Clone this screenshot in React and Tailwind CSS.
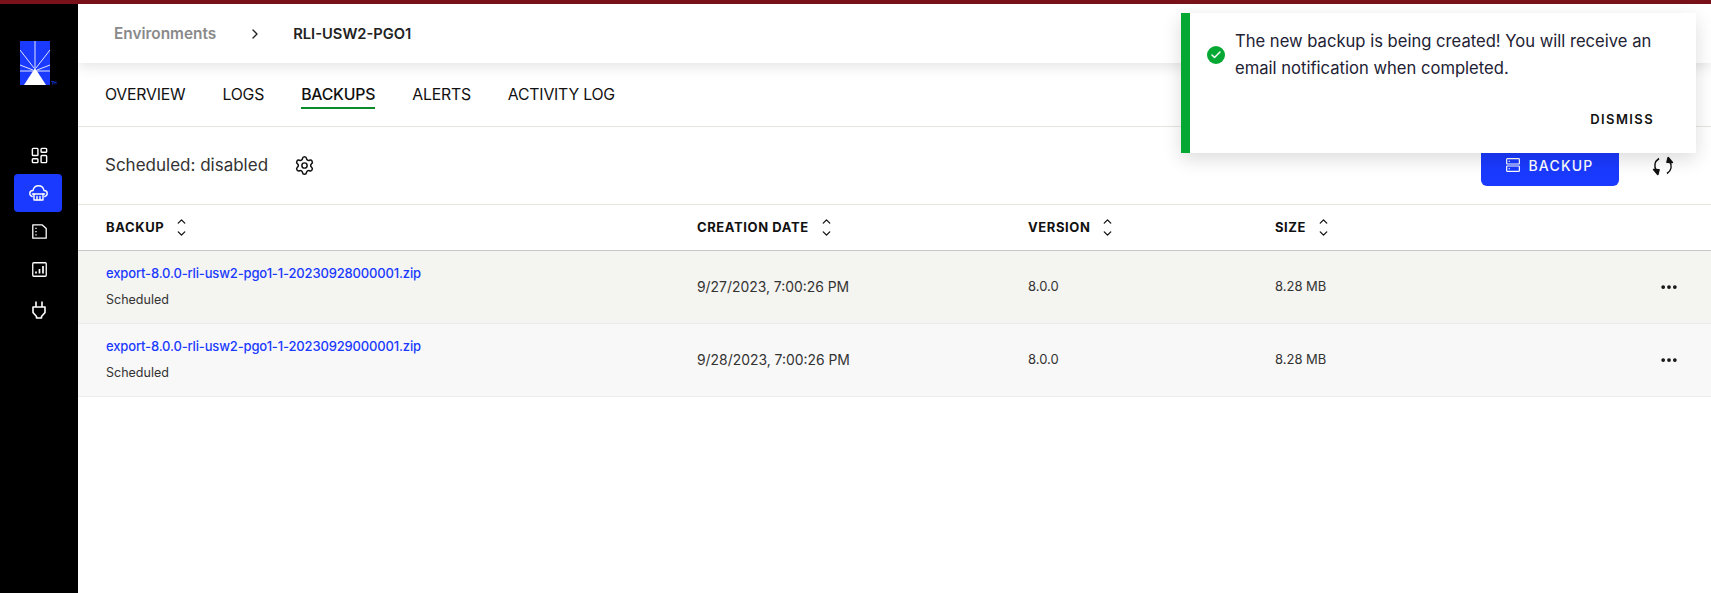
import React from 'react';
import { LayoutDashboard, ChevronRight, Settings, MoreHorizontal, ChevronUp, ChevronDown, Check } from 'lucide-react';

const columns = 'grid grid-cols-[591px_331px_247px_1fr_auto] items-center pl-[28px] pr-[32px]';

const Logo = () => (
  <svg width="38" height="44" viewBox="0 0 38 44" className="block">
    <rect x="0" y="0" width="30" height="44" fill="#1a3aff" />
    <g stroke="#dfe4ff" strokeWidth="1">
      <path d="M15 0V28" />
      <path d="M0 9L14 27" />
      <path d="M30 9L16 27" />
      <path d="M0 24L13 29" />
      <path d="M30 24L17 29" />
      <path d="M0 30H30" />
    </g>
    <path d="M15 27L4 44H26Z" fill="#fff" />
    <path d="M31 40.5h3M32.5 40.5v3M34 43.5v-3l1 1.5 1-1.5v3" stroke="#1a3aff" strokeWidth="0.6" fill="none" />
  </svg>
);

const CloudIcon = () => (
  <svg width="19" height="16" viewBox="0 0 19 16" fill="none" stroke="#fff" strokeWidth="1.4" strokeLinejoin="round" strokeLinecap="round">
    <path d="M3.2 11.5C1.6 11 .8 9.8 .8 8.5.8 6.8 2.2 5.5 4 5.5 4.6 2.8 6.8 .8 9.5 .8 12.2 .8 14.4 2.8 15 5.5 16.8 5.5 18.2 6.8 18.2 8.5 18.2 9.8 17.4 11 15.8 11.5" />
    <path d="M3.5 9H15.5" strokeWidth="1.6" />
    <path d="M5 9V15H14V9" />
    <path d="M8 11.5V15M11 11.5V15" />
  </svg>
);

const ReportIcon = () => (
  <svg width="15" height="15" viewBox="0 0 15 15" fill="none">
    <rect x="0.75" y="0.75" width="13.5" height="13.5" rx="1" stroke="#fff" strokeWidth="1.3" />
    <path d="M4 11.5V9.5M7.5 11.5V7M11 11.5V4" stroke="#fff" strokeWidth="1.7" />
  </svg>
);

const FileIcon = () => (
  <svg width="15" height="15" viewBox="0 0 15 15" fill="none" stroke="#fff" strokeWidth="1.3">
    <path d="M0.8 0.8H10L14.2 4.6V14.2H0.8Z" strokeLinejoin="round" />
    <path d="M4 3.8V5M4 7V8.2M4 10.2V11.4" />
  </svg>
);

const PlugIcon = () => (
  <svg width="14" height="18" viewBox="0 0 14 18" fill="none" stroke="#fff" strokeWidth="1.6" strokeLinejoin="round">
    <path d="M4 0.5V6M10 0.5V6" />
    <path d="M1 6H13V11.5L9.5 15.5V17H4.5V15.5L1 11.5Z" />
  </svg>
);

const SortIcon = () => (
  <span className="flex flex-col items-center ml-[11px] text-[#111]">
    <ChevronUp size={13} strokeWidth={2.4} className="-mb-[1px]" />
    <ChevronDown size={13} strokeWidth={2.4} />
  </span>
);

const RefreshIcon = () => (
  <svg width="22" height="22" viewBox="0 0 22 22" fill="none" stroke="#111" strokeWidth="1.6" strokeLinejoin="round">
    <path d="M7 3.5C2.5 6.5 1.8 11.5 4.5 16" />
    <path d="M1.6 14.5L5.8 19.5 7 14.8Z" fill="#111" />
    <path d="M15 18.5C19.5 15.5 20.2 10.5 17.5 6" />
    <path d="M20.4 7.5L16.2 2.5 15 7.2Z" fill="#111" />
  </svg>
);

const ServerIcon = () => (
  <svg width="14" height="14" viewBox="0 0 13 13" fill="none" stroke="#fff" strokeWidth="1.1">
    <rect x="0.6" y="0.6" width="11.8" height="5" rx="0.6" />
    <rect x="0.6" y="7.4" width="11.8" height="5" rx="0.6" />
    <path d="M2.5 3.1H3.5M2.5 9.9H3.5" />
  </svg>
);

const tabs = ['OVERVIEW', 'LOGS', 'BACKUPS', 'ALERTS', 'ACTIVITY LOG'];

const rows = [
  { file: 'export-8.0.0-rli-usw2-pgo1-1-20230928000001.zip', date: '9/27/2023, 7:00:26 PM', bg: 'bg-[#f4f4f1]' },
  { file: 'export-8.0.0-rli-usw2-pgo1-1-20230929000001.zip', date: '9/28/2023, 7:00:26 PM', bg: 'bg-[#f8f8f8]' },
];

const headers = ['BACKUP', 'CREATION DATE', 'VERSION', 'SIZE'];

export default function App() {
  return (
    <div className="relative w-full h-[593px] overflow-hidden bg-white font-['Inter',sans-serif] text-[#111]">
      <div className="h-[4px] bg-[#7a1319]" />
      <div className="flex h-[589px]">
        {/* sidebar */}
        <aside className="w-[78px] shrink-0 bg-black flex flex-col items-center">
          <div className="mt-[37px] mb-[51px] self-start ml-[20px]">
            <Logo />
          </div>
          <div className="h-[38px] flex items-center justify-center">
            <LayoutDashboard size={19} color="#fff" strokeWidth={1.8} />
          </div>
          <div className="w-[48px] h-[38px] -ml-[2px] rounded-[4px] bg-[#1a3aff] flex items-center justify-center">
            <CloudIcon />
          </div>
          <div className="h-[38px] flex items-center justify-center">
            <FileIcon />
          </div>
          <div className="h-[39px] flex items-center justify-center">
            <ReportIcon />
          </div>
          <div className="h-[39px] mt-[1px] flex items-center justify-center">
            <PlugIcon />
          </div>
        </aside>

        <main className="flex-1 min-w-0">
          <header className="relative h-[59px] flex items-center bg-white shadow-[0_4px_12px_rgba(0,0,0,0.1)] pl-[36px] pt-[1px]">
            <span className="text-[15.4px] font-semibold text-[#8a8a8a]">Environments</span>
            <ChevronRight size={16} strokeWidth={2} className="ml-[31px] text-[#222]" />
            <span className="ml-[30px] text-[14.7px] font-semibold text-[#222]">RLI-USW2-PGO1</span>
          </header>

          <nav className="h-[64px] flex items-center gap-[37px] pl-[27px] border-b border-[#e6e6e0]">
            {tabs.map((t) => (
              <span key={t} className={`relative text-[15.8px] tracking-[-0.2px] ${t === 'BACKUPS' ? 'font-medium' : ''}`}>
                {t}
                {t === 'BACKUPS' && <span className="absolute left-0 right-0 -bottom-[3px] h-[2px] bg-[#0a8a2a]" />}
              </span>
            ))}
          </nav>

          <div className="h-[78px] flex items-center pl-[27px] pr-[37px] border-b border-[#e6e6e0]">
            <span className="text-[17px] text-[#333]">Scheduled: disabled</span>
            <Settings size={21} strokeWidth={1.7} className="ml-[26px]" />
            <button className="ml-auto -mt-[5px] pt-[4px] w-[138px] h-[46px] rounded-[6px] bg-[#1a3aff] text-white text-[14px] font-medium tracking-[1.2px] flex items-center justify-center gap-[8px]">
              <ServerIcon />
              BACKUP
            </button>
            <span className="ml-[33px]">
              <RefreshIcon />
            </span>
          </div>

          <div className={`${columns} h-[46px] border-b border-[#c8c8c8]`}>
            {headers.map((h) => (
              <div key={h} className="flex items-center text-[13px] font-bold tracking-[0.6px]">
                {h}
                <SortIcon />
              </div>
            ))}
            <span />
          </div>

          {rows.map((r) => (
            <div key={r.file} className={`${columns} ${r.bg} h-[73px] border-b border-[#ececec]`}>
              <div>
                <a className="block text-[13px] font-medium text-[#1a3aff] tracking-[-0.15px]">{r.file}</a>
                <div className="mt-[7px] text-[12.5px] text-[#333]">Scheduled</div>
              </div>
              <span className="text-[13.9px] text-[#333]">{r.date}</span>
              <span className="text-[13px] text-[#333]">8.0.0</span>
              <span className="text-[13px] text-[#333]">8.28 MB</span>
              <MoreHorizontal size={20} strokeWidth={2.5} />
            </div>
          ))}
        </main>
      </div>

      {/* toast */}
      <div className="absolute left-[1181px] top-[13px] w-[515px] h-[140px] bg-white border-l-[9px] border-[#06a834] shadow-[0_6px_18px_rgba(0,0,0,0.14)]">
        <div className="flex items-center pl-[17px] pt-[15px]">
          <span className="w-[18px] h-[18px] rounded-full bg-[#06a834] flex items-center justify-center shrink-0">
            <Check size={12} color="#fff" strokeWidth={3} />
          </span>
          <p className="ml-[10px] w-[440px] text-[16.6px] leading-[27px] text-[#222234]">
            The new backup is being created! You will receive an email notification when completed.
          </p>
        </div>
        <div className="absolute right-[42px] top-[97px] text-[13px] font-semibold tracking-[1.4px]">DISMISS</div>
      </div>
    </div>
  );
}
